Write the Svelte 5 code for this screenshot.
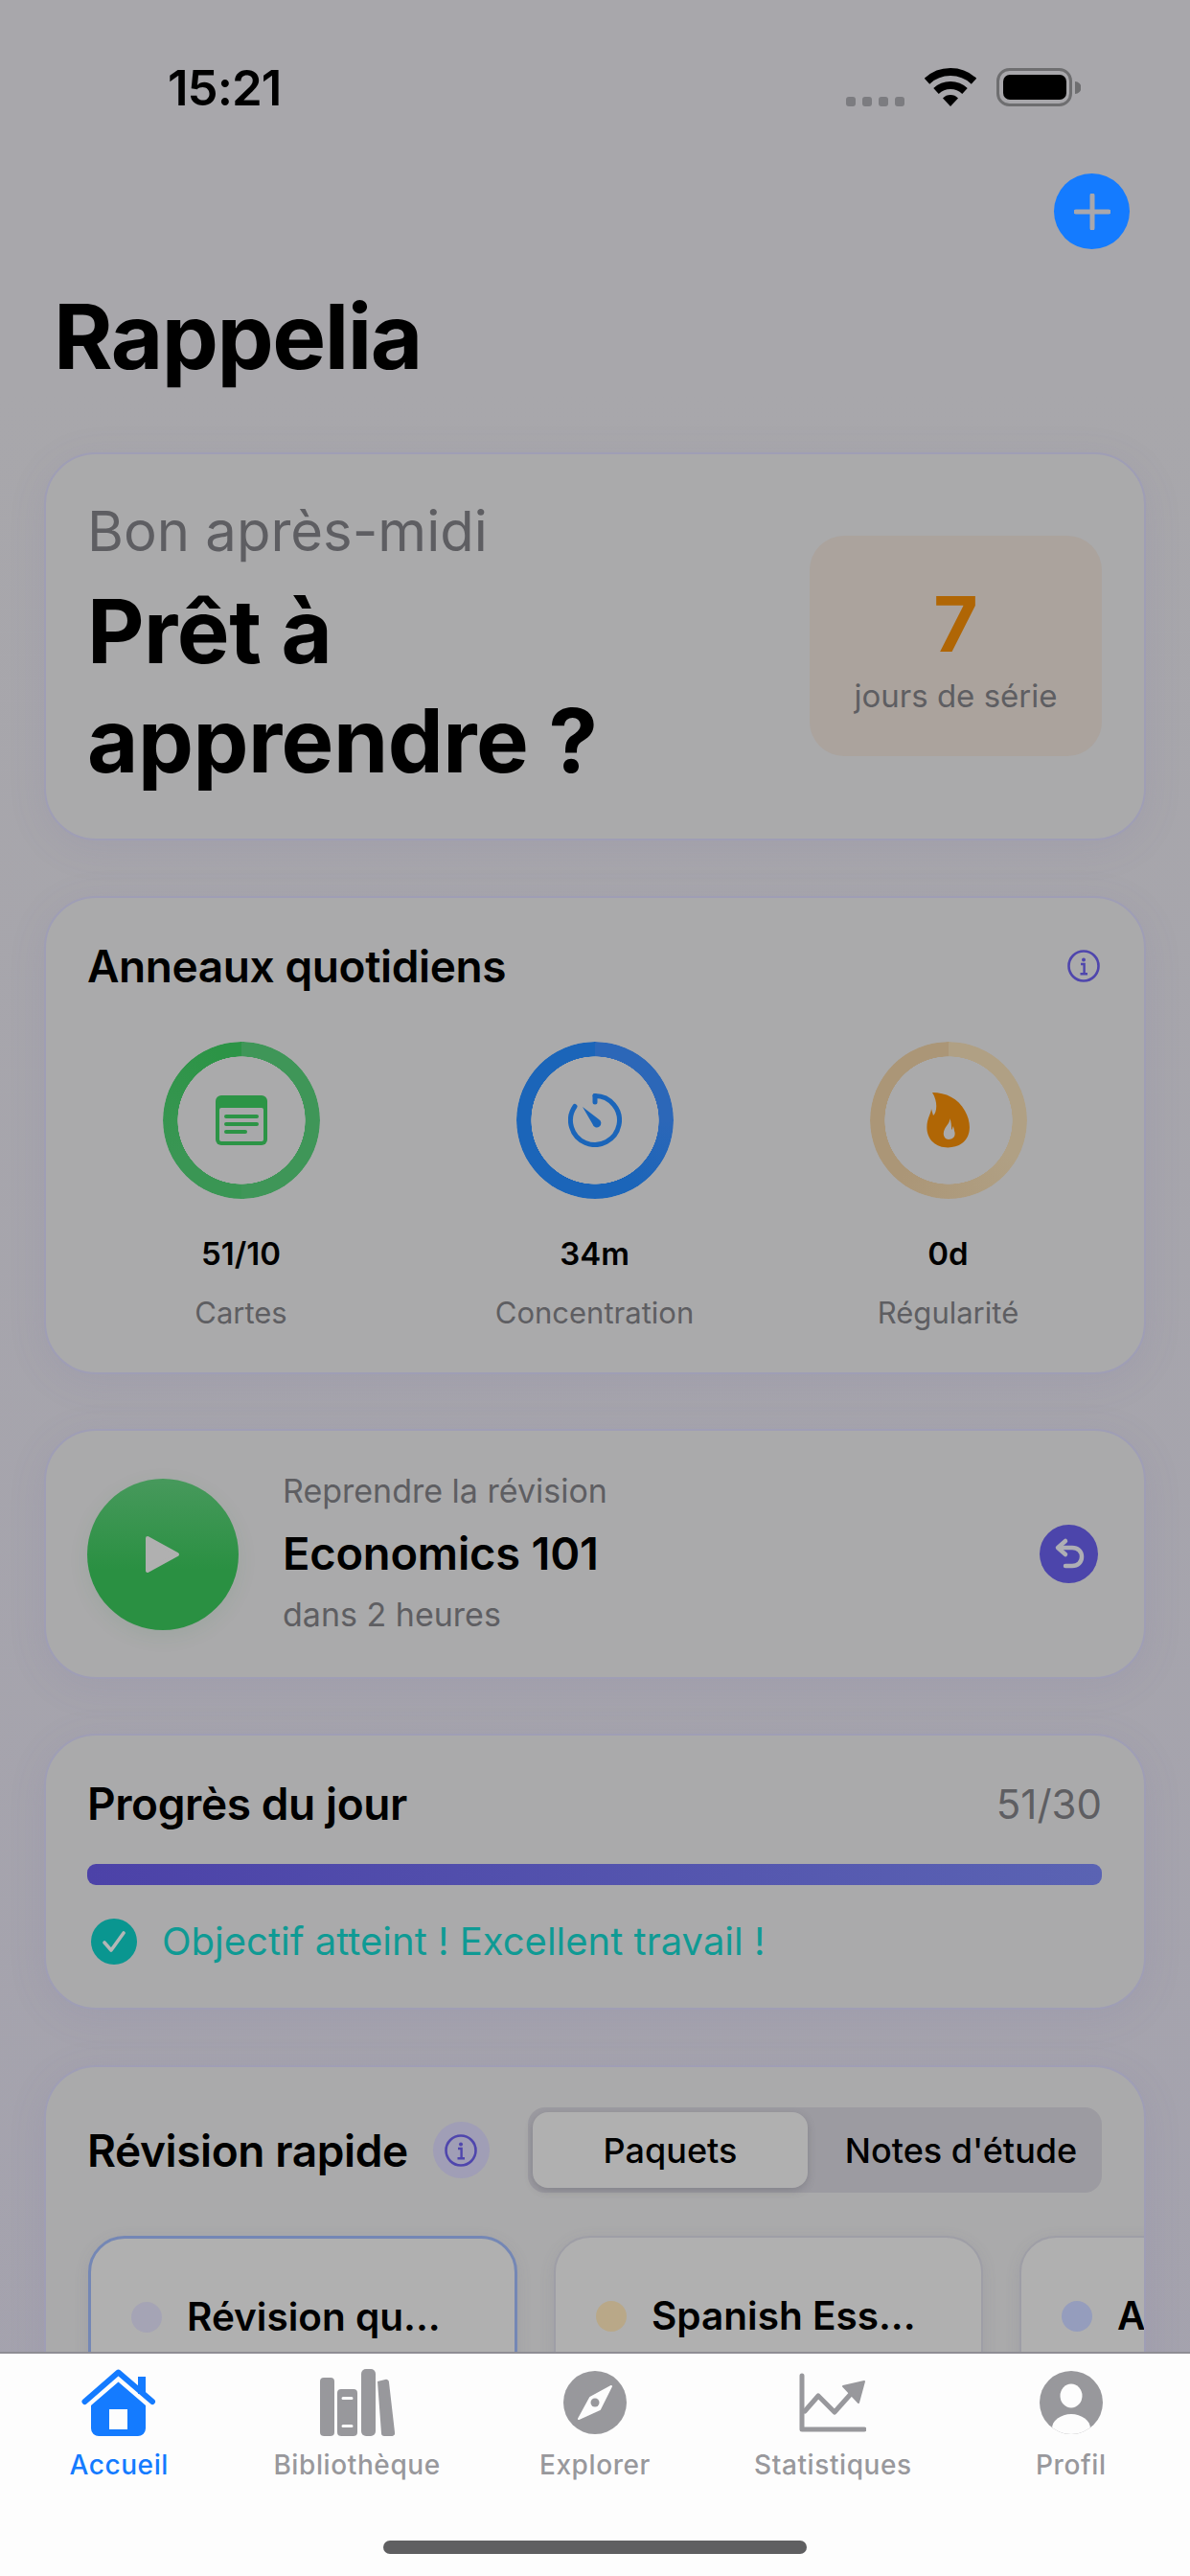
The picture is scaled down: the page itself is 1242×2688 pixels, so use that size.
<script>
  const rings = [
    { cls: 'green', value: '51/10', label: 'Cartes', icon: 'cards' },
    { cls: 'blue', value: '34m', label: 'Concentration', icon: 'timer' },
    { cls: 'orange', value: '0d', label: 'Régularité', icon: 'flame' }
  ];
  const decks = [
    { title: 'Révision qu...', dot: '#a5a4b5', active: true },
    { title: 'Spanish Ess...', dot: '#b9a888', active: false },
    { title: 'Al', dot: '#959dbd', active: false }
  ];
  const tabs = [
    { label: 'Accueil', icon: 'home', active: true },
    { label: 'Bibliothèque', icon: 'books' },
    { label: 'Explorer', icon: 'compass' },
    { label: 'Statistiques', icon: 'stats' },
    { label: 'Profil', icon: 'profile' }
  ];
</script>

{#snippet info()}
  <svg class="info" viewBox="0 0 34 34" width="34" height="34">
    <circle cx="17" cy="17" r="15.5" fill="none" stroke="#4f46ad" stroke-width="2.6"/>
    <circle cx="17" cy="10.5" r="2" fill="#4f46ad"/>
    <path d="M14 15h3.6v10M13.5 25.2h7.5" fill="none" stroke="#4f46ad" stroke-width="2.4"/>
  </svg>
{/snippet}

<div class="screen">
  <div class="scroll">
    <div class="status">
      <span class="time">15:21</span>
      <div class="status-right">
        <div class="dots"><i></i><i></i><i></i><i></i></div>
        <svg width="54" height="40" viewBox="0 0 54 40">
          <path d="M2.5 13.7A36 36 0 0 1 51.5 13.7M12 24A22 22 0 0 1 42 24" fill="none" stroke="#000" stroke-width="8"/>
          <path d="M27 40L19 31.5A11 11 0 0 1 35 31.5Z" fill="#000"/>
        </svg>
        <svg width="88" height="40" viewBox="0 0 88 40">
          <rect x="1.5" y="1.5" width="76" height="37" rx="12" fill="none" stroke="#6e6e70" stroke-width="3"/>
          <rect x="7" y="7" width="66" height="26" rx="7" fill="#000"/>
          <path d="M82 14a6.5 6.5 0 0 1 0 13z" fill="#6e6e70"/>
        </svg>
      </div>
    </div>

    <div class="actions">
      <button class="add" aria-label="Ajouter">
        <svg width="38" height="38" viewBox="0 0 38 38"><path d="M19 2v34M2 19h34" stroke="#a8a7ac" stroke-width="5" stroke-linecap="round"/></svg>
      </button>
    </div>

    <h1>Rappelia</h1>

    <section class="card hero">
      <div class="hero-text">
        <div class="greet">Bon après-midi</div>
        <div class="ready">Prêt à<br/>apprendre ?</div>
      </div>
      <div class="streak">
        <div class="streak-n">7</div>
        <div class="streak-l">jours de série</div>
      </div>
    </section>

    <section class="card daily">
      <div class="row-between">
        <h2>Anneaux quotidiens</h2>
        {@render info()}
      </div>
      <div class="rings">
        {#each rings as r}
          <div class="ring-col">
            <div class="ring-wrap">
              <div class="ring {r.cls}"></div>
              {#if r.icon === 'cards'}
                <svg class="ring-icon" width="54" height="52" viewBox="0 0 54 52">
                  <rect width="54" height="52" rx="6" fill="#2c9446"/>
                  <rect x="4" y="13" width="46" height="35" rx="2" fill="#a8a8aa"/>
                  <path d="M11 22h32M11 30h32" stroke="#2c9446" stroke-width="4" stroke-linecap="round"/>
                  <path d="M11 38h20" stroke="#2c9446" stroke-width="4" stroke-linecap="round"/>
                </svg>
              {:else if r.icon === 'timer'}
                <svg class="ring-icon" width="56" height="56" viewBox="0 0 56 56">
                  <path d="M28 2.5A25.5 25.5 0 1 1 7 13.5" fill="none" stroke="#1b65b9" stroke-width="5" stroke-linecap="round"/>
                  <path d="M28 2.5V9" stroke="#1b65b9" stroke-width="5" stroke-linecap="round"/>
                  <path d="M15 14L32 27A4.5 4.5 0 1 1 25.5 32Z" fill="#1b65b9"/>
                </svg>
              {:else}
                <svg class="ring-icon" width="46" height="58" viewBox="0 0 46 58">
                  <path fill-rule="evenodd" fill="#b06605" d="M6 0C20 0 33 6 40 19C47 31 47 46 37 53C29 59 14 59 7 52C-1 45 -1 33 3 24C4 21 5 19 5 17L7 24C11 21 12 9 6 0ZM24 27C25 31 21 34 19 38C16 44 19 49 23 49C28 49 31 45 29 40C29 38 28 37 28 35C27 37 27 38 26 39C26 35 26 30 24 27Z"/>
                </svg>
              {/if}
            </div>
            <div class="ring-v">{r.value}</div>
            <div class="ring-l">{r.label}</div>
          </div>
        {/each}
      </div>
    </section>

    <section class="card resume">
      <div class="play">
        <svg width="38" height="42" viewBox="0 0 38 42"><path d="M3 4L34 21L3 38Z" fill="#b0b0b0" stroke="#b0b0b0" stroke-width="4" stroke-linejoin="round"/></svg>
      </div>
      <div class="resume-text">
        <div class="muted">Reprendre la révision</div>
        <div class="deck-name">Economics 101</div>
        <div class="muted">dans 2 heures</div>
      </div>
      <div class="undo">
        <svg width="36" height="36" viewBox="0 0 36 36">
          <path d="M14 4L6 11L14 18" fill="none" stroke="#aeaeb4" stroke-width="4.5" stroke-linecap="round" stroke-linejoin="round"/>
          <path d="M7 11H21C27 11 31 15 31 20.5C31 26 27 30 21 30H14" fill="none" stroke="#aeaeb4" stroke-width="4.5" stroke-linecap="round"/>
        </svg>
      </div>
    </section>

    <section class="card progress">
      <div class="row-between">
        <h2>Progrès du jour</h2>
        <span class="count">51/30</span>
      </div>
      <div class="bar"></div>
      <div class="goal">
        <svg width="48" height="48" viewBox="0 0 48 48">
          <circle cx="24" cy="24" r="24" fill="#0a9690"/>
          <path d="M14 25L21 33L34 15" fill="none" stroke="#b4b6b6" stroke-width="3.6" stroke-linecap="round" stroke-linejoin="round"/>
        </svg>
        <span>Objectif atteint ! Excellent travail !</span>
      </div>
    </section>

    <section class="card quick">
      <div class="quick-head">
        <h2>Révision rapide</h2>
        <div class="info-chip">{@render info()}</div>
        <div class="segment">
          <div class="seg on">Paquets</div>
          <div class="seg rest">Notes d'étude</div>
        </div>
      </div>
      <div class="decks">
        {#each decks as d}
          <div class="deck" class:active={d.active}>
            <i class="dot" style="background:{d.dot}"></i>
            <span>{d.title}</span>
          </div>
        {/each}
      </div>
    </section>
  </div>

  <nav class="tabbar">
    <div class="tabs">
      {#each tabs as t}
        <div class="tab" class:active={t.active}>
          <div class="tab-icon">
            {#if t.icon === 'home'}
              <svg width="78" height="70" viewBox="0 0 78 70">
                <path d="M59 8h8v18h-8z" fill="#147bff"/>
                <path d="M3.5 34L38.5 3.5L74 34" fill="none" stroke="#147bff" stroke-width="6" stroke-linecap="round" stroke-linejoin="round"/>
                <path fill-rule="evenodd" fill="#147bff" d="M38.5 13.5L67 38V62a8 8 0 0 1-8 8H18a8 8 0 0 1-8-8V38ZM29 42V63H48V42Z"/>
              </svg>
            {:else if t.icon === 'books'}
              <svg width="78" height="70" viewBox="0 0 78 70" fill="#98989c">
                <rect x="0" y="9" width="15" height="61" rx="4"/>
                <path fill-rule="evenodd" d="M22 21h13a4 4 0 0 1 4 4v41a4 4 0 0 1-4 4H22a4 4 0 0 1-4-4V25a4 4 0 0 1 4-4ZM24 29a1.5 1.5 0 0 0 0 3h9a1.5 1.5 0 0 0 0-3ZM24 58a1.5 1.5 0 0 0 0 3h9a1.5 1.5 0 0 0 0-3Z"/>
                <rect x="43" y="0" width="15" height="70" rx="5"/>
                <path d="M60 13l8-2a3 3 0 0 1 4 3l6 52a3 3 0 0 1-3 4h-8a3 3 0 0 1-3-3z"/>
              </svg>
            {:else if t.icon === 'compass'}
              <svg width="66" height="66" viewBox="0 0 66 66">
                <circle cx="33" cy="33" r="33" fill="#98989c"/>
                <path d="M50 16L38 40L16 50L28 28Z" fill="#fdfdfd" stroke="#fdfdfd" stroke-width="2" stroke-linejoin="round"/>
                <circle cx="33" cy="33" r="4.5" fill="#98989c"/>
              </svg>
            {:else if t.icon === 'stats'}
              <svg width="70" height="62" viewBox="0 0 70 62">
                <path d="M3 3V59H68" fill="none" stroke="#98989c" stroke-width="5" stroke-linecap="round" stroke-linejoin="round"/>
                <path d="M6 40L20 24L37 41L54 22" fill="none" stroke="#98989c" stroke-width="5" stroke-linecap="round" stroke-linejoin="round"/>
                <path d="M68 9L46 14L62 31Z" fill="#98989c" stroke="#98989c" stroke-width="2" stroke-linejoin="round"/>
              </svg>
            {:else}
              <svg width="66" height="66" viewBox="0 0 66 66">
                <defs><clipPath id="pc"><circle cx="33" cy="33" r="33"/></clipPath></defs>
                <circle cx="33" cy="33" r="33" fill="#98989c"/>
                <ellipse cx="33" cy="26" rx="11.5" ry="12.5" fill="#fdfdfd"/>
                <ellipse cx="33" cy="60" rx="20" ry="15" fill="#fdfdfd" clip-path="url(#pc)"/>
              </svg>
            {/if}
          </div>
          <div class="tab-label">{t.label}</div>
        </div>
      {/each}
    </div>
    <div class="indicator"></div>
  </nav>
</div>

<style>
  :global(body) { margin: 0; background: #a7a6ad; }
  .screen {
    width: 1242px; height: 2688px; display: flex; flex-direction: column; overflow: hidden;
    background: linear-gradient(180deg, #a8a7ab 0%, #a8a7ab 15%, #a4a2ae 100%);
    font-family: Inter, "Liberation Sans", sans-serif; color: #000;
  }
  .scroll { flex: 1; min-height: 0; overflow: hidden; padding: 0 46px; display: flex; flex-direction: column; }
  .status { height: 181px; flex: none; display: flex; justify-content: space-between; align-items: flex-start; margin: 0 -46px; padding: 0 114px 0 175px; box-sizing: border-box; }
  .time { font-size: 51px; font-weight: 600; line-height: 58px; margin-top: 63px; letter-spacing: -1px; }
  .status-right { display: flex; align-items: flex-end; gap: 21px; margin-top: 71px; }
  .dots { display: flex; gap: 7px; }
  .dots i { width: 10px; height: 10px; border-radius: 3px; background: #7c7c80; }
  .actions { display: flex; justify-content: flex-end; padding-right: 17px; flex: none; }
  .add { width: 79px; height: 79px; border-radius: 50%; background: #147bff; border: 0; padding: 0; display: flex; align-items: center; justify-content: center; }
  h1 { font-size: 94px; font-weight: 700; line-height: 110px; margin: 36px 0 0 10px; letter-spacing: -1.5px; flex: none; }
  .card {
    flex: none; box-sizing: border-box; border-radius: 54px; border: 2px solid #9f9eb5;
    background: #aaaaab; box-shadow: 0 8px 40px rgba(110, 100, 170, .10);
  }
  .hero { margin-top: 66px; height: 405px; padding: 45px 44px 0 43px; display: flex; justify-content: space-between; }
  .greet { font-size: 58px; line-height: 70px; color: #5e5e62; }
  .ready { font-size: 92px; font-weight: 700; line-height: 114px; margin-top: 13px; letter-spacing: -.5px; }
  .streak { width: 305px; height: 230px; margin-top: 40px; border-radius: 36px; background: #aba39d; text-align: center; }
  .streak-n { font-size: 80px; font-weight: 700; line-height: 90px; margin-top: 47px; color: #b06605; }
  .streak-l { font-size: 33px; line-height: 40px; margin-top: 10px; color: #5e5e62; }

  .daily { margin-top: 58px; height: 499px; padding: 43px 44px 0 43px; }
  .row-between { display: flex; justify-content: space-between; align-items: center; }
  h2 { font-size: 46px; font-weight: 600; line-height: 56px; margin: 0; letter-spacing: -.4px; }
  .info { display: block; margin-right: 2px; }
  .rings { display: grid; grid-template-columns: repeat(3, 369px); margin: 51px 0 0 -24px; }
  .ring-col { display: flex; flex-direction: column; align-items: center; }
  .ring-wrap { width: 164px; height: 164px; position: relative; display: flex; align-items: center; justify-content: center; }
  .ring { position: absolute; inset: 0; border-radius: 50%;
    -webkit-mask: radial-gradient(circle closest-side, transparent 81%, #000 81.5%);
    mask: radial-gradient(circle closest-side, transparent 81%, #000 81.5%); }
  .ring.green { background: conic-gradient(#3f9658 0deg 180deg, #3a9654 180deg 240deg, #2c9446 340deg, #2c9446 360deg); }
  .ring.blue { background: conic-gradient(#2c67b8 0deg 90deg, #1b65b9 150deg 360deg); }
  .ring.orange { background: conic-gradient(#b0a084 0deg 120deg, #ab9677 220deg 360deg); }
  .ring-icon { position: relative; }
  .ring-v { font-size: 33px; font-weight: 600; line-height: 40px; margin-top: 37px; }
  .ring-l { font-size: 31px; line-height: 38px; margin-top: 23px; color: #5e5e62; }

  .resume { margin-top: 57px; height: 261px; padding: 0 44px 0 43px; display: flex; align-items: center; position: relative; }
  .play { width: 158px; height: 158px; border-radius: 50%; background: linear-gradient(180deg, #47995c, #2a9042 60%); display: flex; align-items: center; justify-content: center; box-shadow: 0 6px 20px rgba(40, 130, 70, .1); flex: none; }
  .resume-text { flex: 1; margin-left: 46px; padding-bottom: 2px; }
  .muted { font-size: 34px; line-height: 40px; color: #5e5e62; }
  .deck-name { font-size: 47px; font-weight: 600; line-height: 56px; margin: 17px 0 16px; letter-spacing: -.2px; }
  .undo { width: 61px; height: 61px; border-radius: 50%; background: #4c45ab; display: flex; align-items: center; justify-content: center; margin-right: 4px; flex: none; }
  .progress { margin-top: 57px; height: 288px; padding: 43px 44px 0 43px; }
  .count { font-size: 42px; color: #5e5e62; }
  .bar { height: 22px; margin-top: 35px; border-radius: 9px; background: linear-gradient(90deg, #4c42a8, #5a63b3); }
  .goal { display: flex; align-items: center; gap: 26px; margin: 34px 0 0 4px; font-size: 40px; color: #0f9a94; }
  .quick { margin-top: 58px; height: 400px; padding: 42px 0 0 43px; overflow: hidden; border-bottom: 0; flex: none; }
  .quick-head { display: flex; align-items: center; padding-right: 44px; }
  .info-chip { width: 59px; height: 59px; border-radius: 50%; background: #a09eb6; display: flex; align-items: center; justify-content: center; margin-left: 26px; flex: none; }
  .info-chip :global(.info) { margin: 0; }
  .segment { margin-left: auto; width: 599px; height: 89px; box-sizing: border-box; padding: 5px; border-radius: 18px; background: #9c9ba1; display: flex; }
  .seg { flex: 1; display: flex; align-items: center; justify-content: center; font-size: 36px; font-weight: 500; border-radius: 16px; }
  .seg.rest { padding-left: 18px; }
  .seg.on { flex: none; width: 287px; background: #b0b0b0; box-shadow: 0 3px 8px rgba(60, 60, 70, .25); }
  .decks { display: flex; gap: 38px; margin: 45px 0 0 1px; }
  .deck { flex: none; width: 448px; height: 200px; box-sizing: border-box; border: 2px solid #9e9ea6; border-radius: 38px; background: #b0b0b0; display: flex; align-items: flex-start; gap: 26px; padding: 54px 0 0 42px; font-size: 40.5px; font-weight: 600; line-height: 56px; box-shadow: 0 4px 16px rgba(90, 90, 120, .12); }
  .deck.active { border: 3px solid #7487b5; }
  .dot { width: 32px; height: 32px; border-radius: 50%; margin-top: 12px; flex: none; }

  .tabbar { flex: none; height: 234px; box-sizing: border-box; background: #fdfdfd; border-top: 2px solid #8f8e95; position: relative; }
  .tabs { display: grid; grid-template-columns: repeat(5, 248.4px); }
  .tab { display: flex; flex-direction: column; align-items: center; color: #98989c; }
  .tab.active { color: #147bff; }
  .tab-icon { height: 70px; margin-top: 16px; display: flex; align-items: center; justify-content: center; }
  .tab-label { font-size: 28px; line-height: 34px; margin-top: 13px; letter-spacing: .6px; font-weight: 500; }
  .indicator { position: absolute; left: 400px; bottom: 23px; width: 442px; height: 14px; border-radius: 7px; background: #5f5f61; }
</style>
